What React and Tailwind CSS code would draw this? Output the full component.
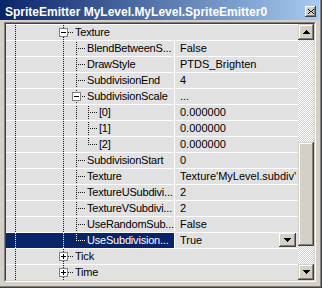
import React from "react";

const G0 = 9, G1 = 57, G2 = 70, G3 = 82;

function vd(x, y0, y1) {
  const o = [];
  for (let y = y0; y <= y1; y++) if ((x + y) % 2 === 1) o.push([x, y]);
  return o;
}
function hd(y, x0, x1) {
  const o = [];
  for (let x = x0; x <= x1; x++) if ((x + y) % 2 === 1) o.push([x, y]);
  return o;
}

function lvl1(sign) {
  return {
    width: 69,
    pts: [...vd(G0, 0, 14), ...vd(G1, 0, 2), ...vd(G1, 12, 14), ...hd(7, 62, 67)],
    box: { x: 53, sign },
    category: true,
  };
}
function lvl2(last) {
  return {
    width: 81,
    pts: [...vd(G0, 0, 14), ...vd(G1, 0, 14), ...vd(G2, 0, last ? 7 : 14), ...hd(7, 71, 79)],
  };
}
function lvl3(last) {
  return {
    width: 93,
    pts: [...vd(G0, 0, 14), ...vd(G1, 0, 14), ...vd(G2, 0, 14), ...vd(G3, 0, last ? 7 : 14), ...hd(7, 83, 91)],
  };
}

const rows = [
  { ...lvl1("minus"), name: "Texture" },
  { ...lvl2(), name: "BlendBetweenS...", value: "False" },
  { ...lvl2(), name: "DrawStyle", value: "PTDS_Brighten" },
  { ...lvl2(), name: "SubdivisionEnd", value: "4" },
  {
    width: 81,
    pts: [...vd(G0, 0, 14), ...vd(G1, 0, 14), ...vd(G2, 0, 2), ...vd(G2, 12, 14), ...hd(7, 75, 79)],
    box: { x: 66, sign: "minus" },
    name: "SubdivisionScale",
    value: "...",
  },
  { ...lvl3(), name: "[0]", value: "0.000000" },
  { ...lvl3(), name: "[1]", value: "0.000000" },
  { ...lvl3(true), name: "[2]", value: "0.000000" },
  { ...lvl2(), name: "SubdivisionStart", value: "0" },
  { ...lvl2(), name: "Texture", value: "Texture'MyLevel.subdiv'" },
  { ...lvl2(), name: "TextureUSubdivi...", value: "2" },
  { ...lvl2(), name: "TextureVSubdivi...", value: "2" },
  { ...lvl2(), name: "UseRandomSub...", value: "False" },
  { ...lvl2(true), name: "UseSubdivision...", value: "True", selected: true },
  { ...lvl1("plus"), name: "Tick" },
  { ...lvl1("plus"), name: "Time" },
];

function Guides({ width, pts, box, color }) {
  return (
    <svg width={width} height={15} className="block shrink-0" shapeRendering="crispEdges">
      {pts.map(([x, y], i) => (
        <rect key={i} x={x} y={y} width={1} height={1} fill={color} />
      ))}
      {box && (
        <g>
          <rect x={box.x + 0.5} y={3.5} width={8} height={8} fill="#ffffff" stroke="#808080" />
          <rect x={box.x + 2} y={7} width={5} height={1} fill="#000" />
          {box.sign === "plus" && <rect x={box.x + 4} y={5} width={1} height={5} fill="#000" />}
        </g>
      )}
    </svg>
  );
}

function Tri({ down }) {
  return (
    <svg width="7" height="4" shapeRendering="crispEdges" className="block">
      {down ? (
        <path d="M0 0h7v1h-1v1h-1v1h-1v1h-1v-1h-1v-1h-1v-1h-1z" fill="#000" />
      ) : (
        <path d="M3 0h1v1h1v1h1v1h1v1h-7v-1h1v-1h1v-1h1z" fill="#000" />
      )}
    </svg>
  );
}

function Row({ r }) {
  return (
    <div className="flex h-[16px] border-t border-white">
      <div
        className={
          r.category
            ? "flex flex-1 items-center overflow-hidden bg-[#e1e1e1] text-black"
            : r.selected
            ? "flex w-[169px] shrink-0 items-center overflow-hidden border-r border-white bg-[#0a246a] text-white"
            : "flex w-[169px] shrink-0 items-center overflow-hidden border-r border-white bg-[#e1e1e1] text-black"
        }
      >
        <Guides width={r.width} pts={r.pts} box={r.box} color={r.selected ? "#ffffff" : "#1a1a1a"} />
        <span className="whitespace-nowrap leading-[15px] tracking-[-0.2px]">{r.name}</span>
      </div>
      {!r.category && (
        <div className="flex min-w-0 flex-1 items-start bg-[#e1e1e1] pl-[5px] text-black">
          <span className="flex-1 whitespace-nowrap leading-[15px]">{r.value}</span>
          {r.selected && (
            <div className="mr-[2px] flex h-[14px] w-[17px] items-center justify-center bg-[#d4d0c8] shadow-[inset_-1px_-1px_#404040,inset_1px_1px_#ffffff,inset_-2px_-2px_#808080]">
              <Tri down />
            </div>
          )}
        </div>
      )}
    </div>
  );
}

function SbBtn({ down }) {
  return (
    <div className="flex h-[16px] w-[16px] items-center justify-center bg-[#d4d0c8] shadow-[inset_-1px_-1px_#404040,inset_1px_1px_#d4d0c8,inset_-2px_-2px_#808080,inset_2px_2px_#ffffff]">
      <Tri down={down} />
    </div>
  );
}

export default function App() {
  return (
    <div className="h-[288px] w-[322px] border-b border-r border-[#404040] bg-[#d4d0c8] font-['Liberation_Sans',Arial,sans-serif] text-[11px]">
      <div className="flex h-full flex-col border-b border-r border-[#808080]">
        <div className="flex h-[20px] w-[319px] items-start bg-[linear-gradient(to_right,#0a246a,#a6caf0)] pl-[5px]">
          <span className="pt-[5px] text-[12px] font-bold leading-[14px] whitespace-nowrap text-white">
            SpriteEmitter MyLevel.MyLevel.SpriteEmitter0
          </span>
          <div className="ml-auto mr-[3px] mt-[6px] flex h-[11px] w-[11px] items-center justify-center bg-[#d4d0c8] shadow-[inset_-1px_-1px_#404040,inset_1px_1px_#ffffff,inset_-2px_-2px_#808080]">
            <svg width="6" height="5" shapeRendering="crispEdges" className="block">
              <path d="M0 0h1v1h1v1h2v-1h1v-1h1v1h-1v1h-1v1h1v1h1v1h-1v-1h-1v-1h-2v1h-1v1h-1v-1h1v-1h1v-1h-1v-1h-1z" fill="#000" />
            </svg>
          </div>
        </div>
        <div className="h-[2px]" />
        <div className="ml-[4px] h-[260px] w-[312px] border border-b-white border-l-[#808080] border-r-white border-t-[#808080]">
          <div className="flex h-full border border-b-[#d4d0c8] border-l-[#404040] border-r-[#d4d0c8] border-t-[#404040]">
            <div className="flex w-[292px] flex-col">
              {rows.map((r, i) => (
                <Row key={i} r={r} />
              ))}
            </div>
            <div className="flex w-[16px] flex-col">
              <SbBtn />
              <div className="flex flex-1 flex-col bg-[repeating-conic-gradient(#d4d0c8_0_25%,#ffffff_0_50%)] bg-[length:2px_2px]">
                <div className="h-[102px]" />
                <div className="h-[104px] bg-[#d4d0c8] shadow-[inset_-1px_-1px_#404040,inset_1px_1px_#d4d0c8,inset_-2px_-2px_#808080,inset_2px_2px_#ffffff]" />
              </div>
              <SbBtn down />
            </div>
          </div>
        </div>
      </div>
    </div>
  );
}
